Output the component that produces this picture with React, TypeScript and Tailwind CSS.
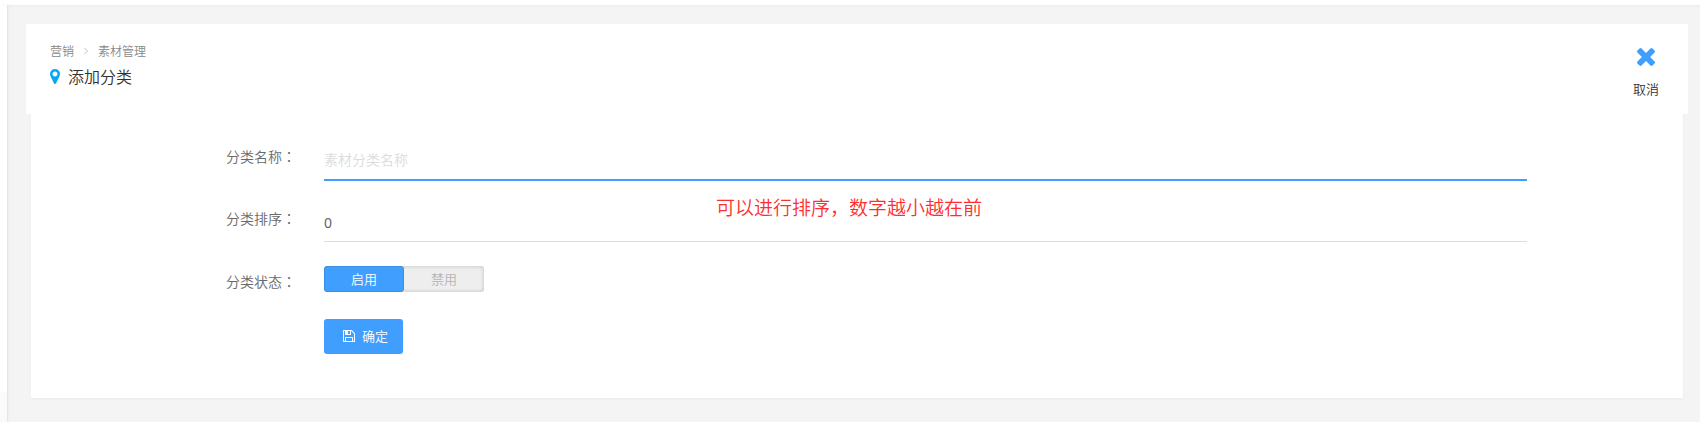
import type { ReactNode } from "react";

function MapMarkerIcon() {
  return (
    <svg viewBox="384 128 1024 1536" className="h-[15px] w-[10px] fill-[#03a9f4]" aria-hidden="true">
      <path d="M1152 640q0-106-75-181t-181-75-181 75-75 181 75 181 181 75 181-75 75-181zm256 0q0 109-33 179l-364 774q-16 33-47.5 52t-67.5 19-67.5-19-46.5-52l-365-774q-33-70-33-179 0-212 150-362t362-150 362 150 150 362z" />
    </svg>
  );
}

function TimesIcon() {
  return (
    <svg viewBox="302 366 1188 1188" className="h-[18px] w-[18px] fill-[#409eff]" aria-hidden="true">
      <path d="M1490 1322q0 40-28 68l-136 136q-28 28-68 28t-68-28l-294-294-294 294q-28 28-68 28t-68-28l-136-136q-28-28-28-68t28-68l294-294-294-294q-28-28-28-68t28-68l136-136q28-28 68-28t68 28l294 294 294-294q28-28 68-28t68 28l136 136q28 28 28 68t-28 68l-294 294 294 294q28 28 28 68z" />
    </svg>
  );
}

function SaveIcon() {
  return (
    <svg viewBox="128 128 1536 1536" className="h-3 w-3 fill-white" aria-hidden="true">
      <path d="M512 1536h768v-384h-768v384zm896 0h128v-896q0-14-10-38.5t-20-34.5l-281-281q-10-10-34-20t-39-10v416q0 40-28 68t-68 28h-576q-40 0-68-28t-28-68v-416h-128v1280h128v-416q0-40 28-68t68-28h832q40 0 68 28t28 68v416zm-384-928v-320q0-13-9.5-22.5t-22.5-9.5h-192q-13 0-22.5 9.5t-9.5 22.5v320q0 13 9.5 22.5t22.5 9.5h192q13 0 22.5-9.5t9.5-22.5zm640 32v928q0 40-28 68t-68 28h-1344q-40 0-68-28t-28-68v-1344q0-40 28-68t68-28h928q40 0 88 20t76 48l280 280q28 28 48 76t20 88z" />
    </svg>
  );
}

// The Traditional face centres the full-width colon in its cell
function Colon() {
  return <span className="font-['Noto_Sans_CJK_TC',sans-serif]">：</span>;
}

function FieldLabel({ htmlFor, children }: { htmlFor: string; children: ReactNode }) {
  return (
    <label htmlFor={htmlFor} className="text-sm leading-[26px] whitespace-nowrap text-[#676a6c]">
      {children}
      <Colon />
    </label>
  );
}

export default function App() {
  return (
    <div className="flex min-h-screen flex-col bg-[#f4f4f4] font-['Noto_Sans_CJK_SC',sans-serif] font-[350]">
      <div className="h-[5px] bg-white" />
      <div className="flex flex-1">
        <aside className="flex w-[7px] flex-col justify-end bg-white shadow-[1px_0_2px_rgba(0,0,0,0.08)]">
          <div className="h-[30px] bg-[#fafafa]" />
        </aside>

        <main className="flex-1 pt-[19px] pr-3 pb-6 pl-[19px] shadow-[inset_0_3px_3px_-2px_rgba(0,0,0,0.04)]">
          <header className="flex justify-between bg-white pt-[19px] pr-[29px] pb-[15px] pl-6">
            <div>
              <nav className="flex items-center gap-2 text-xs leading-4 text-[#888888]">
                <a href="#marketing">营销</a>
                <svg viewBox="0 0 8 8" className="h-2 w-2 fill-none stroke-[#c0c0c0]" aria-hidden="true">
                  <path d="M2.5 1 5.5 4 2.5 7" />
                </svg>
                <a href="#materials">素材管理</a>
              </nav>
              <h1 className="mt-[5px] flex items-center gap-2 text-base leading-6 text-[#2f3133]">
                <MapMarkerIcon />
                添加分类
              </h1>
            </div>
            <a href="#back" className="flex flex-col items-center gap-[13px] pt-[5px] text-[13px] leading-5 text-[#2f3133]">
              <TimesIcon />
              取消
            </a>
          </header>

          <form className="mx-[5px] flex flex-col gap-6 bg-white pt-[29px] pr-[156px] pb-11 pl-[195px] shadow-[0_1px_3px_rgba(0,0,0,0.04)]">
            <div className="grid grid-cols-[70px_1fr] gap-x-7">
              <FieldLabel htmlFor="name">分类名称</FieldLabel>
              <div className="relative">
                <input
                  id="name"
                  type="text"
                  placeholder="素材分类名称"
                  className="block h-[38px] w-full border-b-2 border-[#409eff] pb-1 text-sm text-[#606266] outline-none placeholder:text-[#dcdcdc]"
                />
                <p className="pointer-events-none absolute top-[50px] left-[392px] text-[19px] leading-7 whitespace-nowrap text-[#ff2d2d]">
                  可以进行排序，数字越小越在前
                </p>
              </div>
            </div>

            <div className="grid grid-cols-[70px_1fr] gap-x-7">
              <FieldLabel htmlFor="sort">分类排序</FieldLabel>
              <input
                id="sort"
                type="text"
                defaultValue="0"
                className="block h-[37px] w-full border-b border-[#dddddd] pb-0.5 font-['Noto_Sans','Noto_Sans_CJK_SC',sans-serif] text-sm font-normal text-[#606266] outline-none"
              />
            </div>

            <div className="grid h-[29px] grid-cols-[70px_1fr] items-start gap-x-7">
              <span id="status" className="pt-0.5 text-sm leading-[26px] whitespace-nowrap text-[#676a6c]">
                分类状态
                <Colon />
              </span>
              <div
                role="radiogroup"
                aria-labelledby="status"
                className="flex h-[26px] w-40 rounded-[3px] bg-[#eeeeee] text-[13px] shadow-[inset_0_0_4px_rgba(0,0,0,0.2)]"
              >
                <label className="flex w-20 cursor-pointer items-center justify-center rounded-[3px] text-[#b4b4b4] has-checked:border has-checked:border-[#3a8ee6] has-checked:bg-[#409eff] has-checked:text-white">
                  <input type="radio" name="status" value="1" defaultChecked className="sr-only" />
                  启用
                </label>
                <label className="flex w-20 cursor-pointer items-center justify-center rounded-[3px] text-[#b4b4b4] has-checked:border has-checked:border-[#3a8ee6] has-checked:bg-[#409eff] has-checked:text-white">
                  <input type="radio" name="status" value="0" className="sr-only" />
                  禁用
                </label>
              </div>
            </div>

            <div className="grid grid-cols-[70px_1fr] gap-x-7">
              <button
                type="button"
                className="col-start-2 flex h-[35px] items-center gap-[7px] justify-self-start rounded-[3px] bg-[#409eff] pr-[15px] pb-0.5 pl-[19px] text-[13px] text-white"
              >
                <SaveIcon />
                确定
              </button>
            </div>
          </form>
        </main>
      </div>
    </div>
  );
}
